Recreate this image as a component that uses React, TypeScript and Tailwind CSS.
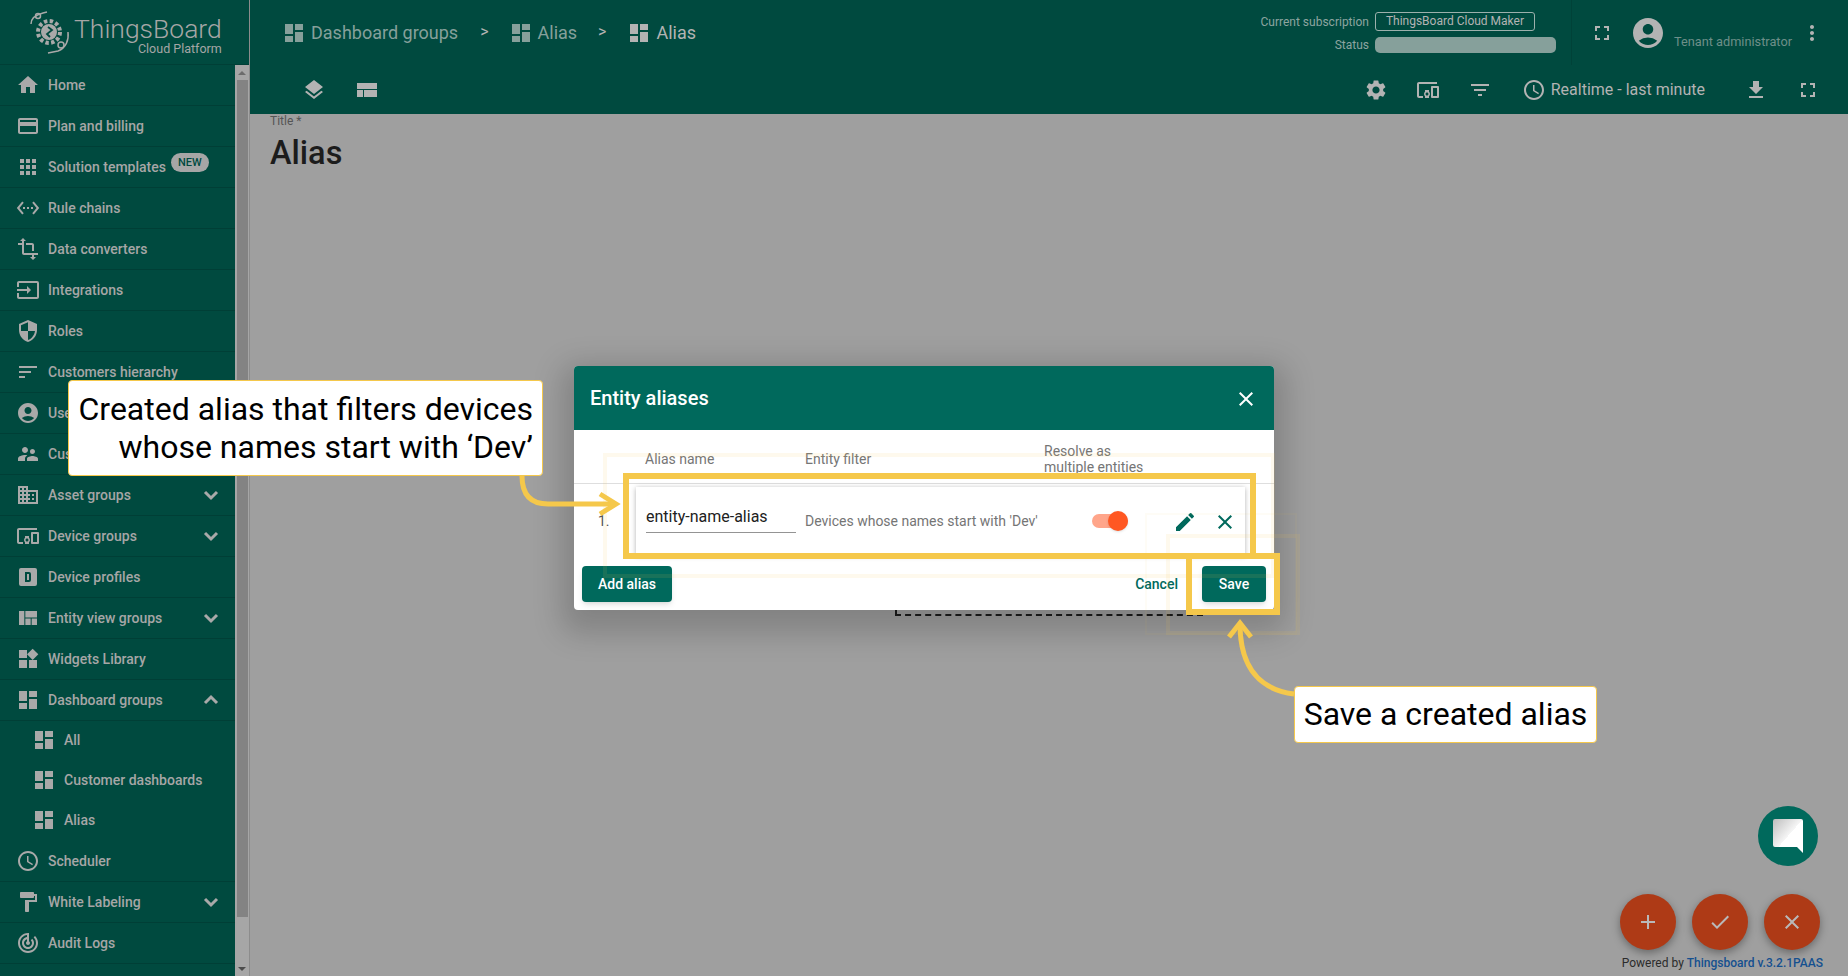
import type { ComponentType, ReactNode } from "react";
import {
  MdAccountCircle,
  MdAdd,
  MdApps,
  MdCheck,
  MdClose,
  MdCreditCard,
  MdDashboard,
  MdDevicesOther,
  MdDomain,
  MdEdit,
  MdFileDownload,
  MdFilterList,
  MdFormatPaint,
  MdFullscreen,
  MdHome,
  MdInput,
  MdLayers,
  MdMoreVert,
  MdSchedule,
  MdSecurity,
  MdSettings,
  MdSettingsEthernet,
  MdSort,
  MdSupervisorAccount,
  MdTrackChanges,
  MdTransform,
  MdViewQuilt,
  MdWidgets,
} from "react-icons/md";

type IconType = ComponentType<{ size?: number; className?: string }>;

const ProfileIcon: IconType = ({ size, className }) => (
  <svg width={size} height={size} viewBox="0 0 24 24" fill="currentColor" className={className}>
    <path d="M9,7V17H13A2,2 0 0,0 15,15V9A2,2 0 0,0 13,7H9M11,9H13V15H11V9M5,3H19A2,2 0 0,1 21,5V19A2,2 0 0,1 19,21H5A2,2 0 0,1 3,19V5A2,2 0 0,1 5,3Z" fillRule="evenodd" />
  </svg>
);

const Chevron = ({ up }: { up?: boolean }) => (
  <svg width="24" height="24" viewBox="0 0 24 24" fill="none" stroke="#a9a9a9" strokeWidth="3" className="ml-auto">
    <path d={up ? "M6 15 L12 9 L18 15" : "M6 9 L12 15 L18 9"} />
  </svg>
);

type MenuItem = { label: string; icon: IconType; caret?: "down" | "up"; badge?: boolean; sub?: boolean };

const menu: MenuItem[] = [
  { label: "Home", icon: MdHome },
  { label: "Plan and billing", icon: MdCreditCard },
  { label: "Solution templates", icon: MdApps, badge: true },
  { label: "Rule chains", icon: MdSettingsEthernet },
  { label: "Data converters", icon: MdTransform },
  { label: "Integrations", icon: MdInput },
  { label: "Roles", icon: MdSecurity },
  { label: "Customers hierarchy", icon: MdSort },
  { label: "Users", icon: MdAccountCircle },
  { label: "Customer groups", icon: MdSupervisorAccount },
  { label: "Asset groups", icon: MdDomain, caret: "down" },
  { label: "Device groups", icon: MdDevicesOther, caret: "down" },
  { label: "Device profiles", icon: ProfileIcon },
  { label: "Entity view groups", icon: MdViewQuilt, caret: "down" },
  { label: "Widgets Library", icon: MdWidgets },
  { label: "Dashboard groups", icon: MdDashboard, caret: "up" },
  { label: "All", icon: MdDashboard, sub: true },
  { label: "Customer dashboards", icon: MdDashboard, sub: true },
  { label: "Alias", icon: MdDashboard, sub: true },
  { label: "Scheduler", icon: MdSchedule },
  { label: "White Labeling", icon: MdFormatPaint, caret: "down" },
  { label: "Audit Logs", icon: MdTrackChanges },
  { label: "", icon: MdCreditCard },
];

const Logo = () => (
  <svg width="44" height="44" viewBox="0 0 44 44" fill="none" stroke="#a9a9a9" className="shrink-0">
    <path d="M3 14 C3 9 7 5 15 3 L19 2" strokeWidth="1.5" />
    <path d="M40 22 C41 30 38 38 30 41 L20 43" strokeWidth="1.5" />
    <circle cx="10" cy="6" r="2.5" strokeWidth="1.5" />
    <circle cx="33" cy="35" r="3" strokeWidth="1.5" />
    <circle cx="21" cy="22" r="8" fill="#a9a9a9" stroke="none" />
    <circle cx="21" cy="22" r="11" strokeWidth="4" strokeDasharray="3.4 2.4" />
    <path d="M20 17 L24 20 L19 24 L22 27" stroke="#004a3f" strokeWidth="1.8" />
  </svg>
);

const SideRow = ({ item }: { item: MenuItem }) => {
  const Icon = item.icon;
  if (item.sub) {
    return (
      <div className="flex h-10 shrink-0 items-center pb-[2px] pl-[32px]">
        <Icon size={24} className="text-[#a9a9a9]" />
        <span className="ml-2 text-sm font-medium text-[#a6a6a6]">{item.label}</span>
      </div>
    );
  }
  return (
    <div className="flex h-[41px] shrink-0 items-center border-b border-[#003f36] pl-4 pr-[12px]">
      <Icon size={24} className="shrink-0 text-[#a9a9a9]" />
      <span className="ml-2 whitespace-nowrap text-sm font-medium text-[#a6a6a6]">{item.label}</span>
      {item.badge && (
        <span className="mb-[10px] ml-[5px] rounded-full bg-[#a6a6a6] px-[7px] text-[11px] font-medium leading-[19px] text-[#004a3f]">
          NEW
        </span>
      )}
      {item.caret === "down" && <Chevron />}
      {item.caret === "up" && <Chevron up />}
    </div>
  );
};

const Sidebar = () => (
  <div className="flex w-[250px] shrink-0 flex-col border-r border-[#8c8c8c]">
    <div className="flex h-[65px] shrink-0 items-center border-b border-[#003f36] bg-[#004a3f] pl-[28px]">
      <Logo />
      <div className="ml-[2px] flex flex-col items-end pt-[6px] text-[#a6a6a6]">
        <span className="text-[26.5px] font-light leading-[30px]">ThingsBoard</span>
        <span className="-mt-[2px] text-[12.5px] leading-[14px]">Cloud Platform</span>
      </div>
    </div>
    <div className="flex min-h-0 flex-1">
      <div className="w-[235px] shrink-0 overflow-hidden bg-[#004a3f]">
        {menu.map((item, i) => (
          <SideRow key={i} item={item} />
        ))}
      </div>
      <div className="flex w-[15px] flex-col items-center bg-[#a6a6a6]">
        <div className="flex h-[15px] w-full items-center justify-center">
          <div className="h-0 w-0 border-x-[4px] border-b-[4px] border-x-transparent border-b-[#6c6c6c]" />
        </div>
        <div className="h-[837px] w-[11px] bg-[#838383]" />
        <div className="mt-auto flex h-[15px] w-full items-center justify-center">
          <div className="h-0 w-0 border-x-[4px] border-t-[4px] border-x-transparent border-t-[#4c4c4c]" />
        </div>
      </div>
    </div>
  </div>
);

const Crumb = ({ label, bright }: { label: string; bright?: boolean }) => (
  <div className={`mt-[1px] flex items-center ${bright ? "text-[#b3b3b3]" : "text-[#86a09b]"}`}>
    <MdDashboard size={24} className="-mx-[3px]" />
    <span className="ml-[8px] text-lg">{label}</span>
  </div>
);

const Sep = ({ cls }: { cls: string }) => (
  <span className={`${cls} -mt-[2px] text-base text-[#b3b3b3]`}>&gt;</span>
);

const TableIcon = () => (
  <svg width="20" height="14" viewBox="0 0 20 14" fill="currentColor">
    <rect x="0" y="0" width="20" height="6" />
    <rect x="0" y="7" width="6" height="7" />
    <rect x="7" y="7" width="13" height="7" />
  </svg>
);

const Header = () => (
  <div className="shrink-0 bg-[#004a3f]">
    <div className="flex h-[65px] items-center pl-[35px] pr-[24px]">
      <Crumb label="Dashboard groups" />
      <Sep cls="ml-[22px]" />
      <div className="ml-[23px]"><Crumb label="Alias" /></div>
      <Sep cls="ml-[21px]" />
      <div className="ml-[24px]"><Crumb label="Alias" bright /></div>
      <div className="ml-auto grid grid-cols-[auto_181px] items-center gap-x-[6px] gap-y-[6px] text-xs text-[#8da5a0]">
        <span className="text-right">Current subscription</span>
        <span className="w-[160px] rounded-[3px] border border-[#9cb0ac] text-center leading-[17px] text-[#b3b3b3]">
          ThingsBoard Cloud Maker
        </span>
        <span className="text-right">Status</span>
        <div className="h-4 rounded-[5px] bg-[#86a09b]" />
      </div>
      <div className="ml-[15px] h-full w-px bg-[#004238]" />
      <MdFullscreen size={24} className="ml-[18px] text-[#b3b3b3]" />
      <MdAccountCircle size={36} className="ml-[16px] text-[#b3b3b3]" />
      <span className="ml-[8px] mt-[18px] text-[12.75px] text-[#6e8f89]">Tenant administrator</span>
      <MdMoreVert size={24} className="ml-[8px] text-[#b3b3b3]" />
    </div>
    <div className="flex h-[49px] items-center pl-[52px] pr-[28px] text-[#b3b3b3]">
      <MdLayers size={24} />
      <div className="ml-[31px]"><TableIcon /></div>
      <MdSettings size={24} className="ml-auto" />
      <MdDevicesOther size={24} className="ml-[28px]" />
      <MdFilterList size={24} className="ml-[28px]" />
      <MdSchedule size={24} className="ml-[30px]" />
      <span className="ml-[5px] text-base">Realtime - last minute</span>
      <MdFileDownload size={24} className="ml-[39px]" />
      <MdFullscreen size={24} className="ml-[28px]" />
    </div>
  </div>
);

const EntityAliases = () => (
  <div className="absolute left-[574px] top-[366px] z-10 flex h-[244px] w-[700px] flex-col overflow-hidden rounded bg-white shadow-[0_11px_30px_12px_rgba(0,0,0,0.18)]">
    <div className="flex h-16 shrink-0 items-center justify-between bg-[#00695c] pl-4 pr-[16px] text-white">
      <span className="text-xl font-medium">Entity aliases</span>
      <MdClose size={24} className="mt-[2px]" />
    </div>
    <div className="flex h-[54px] shrink-0 items-center border-b border-[#dedede] text-sm leading-4 text-[#757575]">
      <span className="ml-[71px] mt-[4px] w-[160px]">Alias name</span>
      <span className="mt-[4px] w-[239px]">Entity filter</span>
      <span className="mt-[4px]">Resolve as<br />multiple entities</span>
    </div>
    <div className="flex items-center pl-6 pt-[3px]">
      <span className="w-[38px] text-sm text-[#555]">1.</span>
      <div className="flex h-[68px] w-[609px] items-center pl-[10px] shadow-[0_1px_5px_rgba(0,0,0,0.3)]">
        <div className="-mt-[8px] flex h-8 w-[150px] items-center border-b border-[#949494] text-base text-[#212121]">
          entity-name-alias
        </div>
        <span className="ml-[9px] w-[287px] text-sm text-[#757575]">Devices whose names start with 'Dev'</span>
        <div className="relative h-[14px] w-[36px] rounded-full bg-[#ffa58a]">
          <div className="absolute -top-[3px] right-0 h-5 w-5 rounded-full bg-[#ff5722] shadow" />
        </div>
        <MdEdit size={24} className="ml-[45px] mt-[2px] text-[#00695c]" />
        <MdClose size={24} className="ml-[16px] mt-[2px] text-[#00695c]" />
      </div>
    </div>
    <div className="mt-auto flex items-center px-2 pb-2">
      <button className="h-9 w-[90px] rounded bg-[#00695c] text-sm font-medium text-white shadow-md">Add alias</button>
      <span className="ml-auto text-sm font-medium text-[#00695c]">Cancel</span>
      <button className="ml-[24px] h-9 w-16 rounded bg-[#00695c] text-sm font-medium text-white shadow-md">Save</button>
    </div>
  </div>
);

const Callout = ({ cls, children }: { cls: string; children: ReactNode }) => (
  <div className={`absolute z-30 rounded-[4px] border border-[#f5c84b] bg-white text-[32px] leading-[38px] text-black ${cls}`}>
    {children}
  </div>
);

const Annotations = () => (
  <>
    <div className="absolute left-[603px] top-[453px] z-20 h-[125px] w-[672px] border-4 border-[#f5c84b]/10" />
    <div className="absolute left-[1145px] top-[513px] z-20 h-[122px] w-[152px] border-2 border-[#f5c84b]/5" />
    <div className="absolute left-[1166px] top-[534px] z-20 h-[101px] w-[134px] border-4 border-[#f5c84b]/10" />
    <div className="absolute left-[623px] top-[473px] z-20 h-[86px] w-[633px] border-[6px] border-[#f5c84b]" />
    <div className="absolute left-[1186px] top-[553px] z-20 h-[62px] w-[94px] border-[6px] border-[#f5c84b]" />

    <Callout cls="left-[68px] top-[380px] flex h-[96px] w-[475px] items-center justify-end pr-[9px] text-right">
      <span>Created alias that filters devices<br />whose names start with ‘Dev’</span>
    </Callout>
    <Callout cls="left-[1294px] top-[686px] flex h-[57px] w-[303px] items-center justify-center pb-[2px]">
      Save a created alias
    </Callout>

    <svg className="absolute left-[510px] top-[470px] z-20" width="115" height="50" viewBox="0 0 115 50" fill="none" stroke="#f5c84b" strokeWidth="5">
      <path d="M12 6 C12 24 20 34 38 34 H105" />
      <path d="M90 24 L106 34 L90 44" />
    </svg>
    <svg className="absolute left-[1220px] top-[616px] z-20" width="80" height="85" viewBox="0 0 80 85" fill="none" stroke="#f5c84b" strokeWidth="5">
      <path d="M74 78 C42 74 20 54 20 8" />
      <path d="M9 21 L20 7 L31 21" />
    </svg>
  </>
);

const Fab = ({ children, cls }: { children: ReactNode; cls?: string }) => (
  <div className={`flex h-14 w-14 items-center justify-center rounded-full bg-[#ae3a16] text-[#b9b9b9] shadow-[0_3px_8px_rgba(0,0,0,0.35)] ${cls ?? ""}`}>
    {children}
  </div>
);

const Corner = () => (
  <div className="absolute bottom-0 right-0 z-10 flex w-[240px] flex-col items-end pr-[25px]">
    <div className="mb-[28px] mr-[5px] flex h-[60px] w-[60px] items-center justify-center rounded-full bg-[#00695c]">
      <svg width="30" height="34" viewBox="0 0 30 34">
        <defs>
          <linearGradient id="chat" x1="0" y1="0" x2="1" y2="1">
            <stop offset="0" stopColor="#bdbdbd" />
            <stop offset="0.5" stopColor="#f6f6f6" />
            <stop offset="0.5" stopColor="#ffffff" />
          </linearGradient>
        </defs>
        <path d="M2 0 H28 Q30 0 30 2 V34 L24 28 H2 Q0 28 0 26 V2 Q0 0 2 0 Z" fill="url(#chat)" />
      </svg>
    </div>
    <div className="mr-[3px] flex gap-4">
      <Fab><MdAdd size={24} /></Fab>
      <Fab><MdCheck size={24} /></Fab>
      <Fab><MdClose size={24} /></Fab>
    </div>
    <div className="mb-[5px] mt-[6px] whitespace-nowrap text-xs leading-[15px] text-[#2b2b2b]">
      Powered by <span className="font-medium text-[#15508f]">Thingsboard v.3.2.1PAAS</span>
    </div>
  </div>
);

export default function App() {
  return (
    <div className="relative flex h-[976px] w-[1848px] overflow-hidden bg-[#9f9f9f] font-['Roboto',sans-serif]">
      <Sidebar />
      <div className="flex min-w-0 flex-1 flex-col">
        <Header />
        <div className="px-5 pt-[1px]">
          <div className="text-xs leading-[13px] text-[#555]">Title *</div>
          <div className="mt-[6px] text-[32.5px] font-medium leading-[38px] text-[#1c1c1c]">Alias</div>
        </div>
      </div>
      <div className="absolute left-[895px] top-[560px] h-[56px] w-[308px] border-2 border-dashed border-[#1c1c1c]" />
      <EntityAliases />
      <Annotations />
      <Corner />
    </div>
  );
}
